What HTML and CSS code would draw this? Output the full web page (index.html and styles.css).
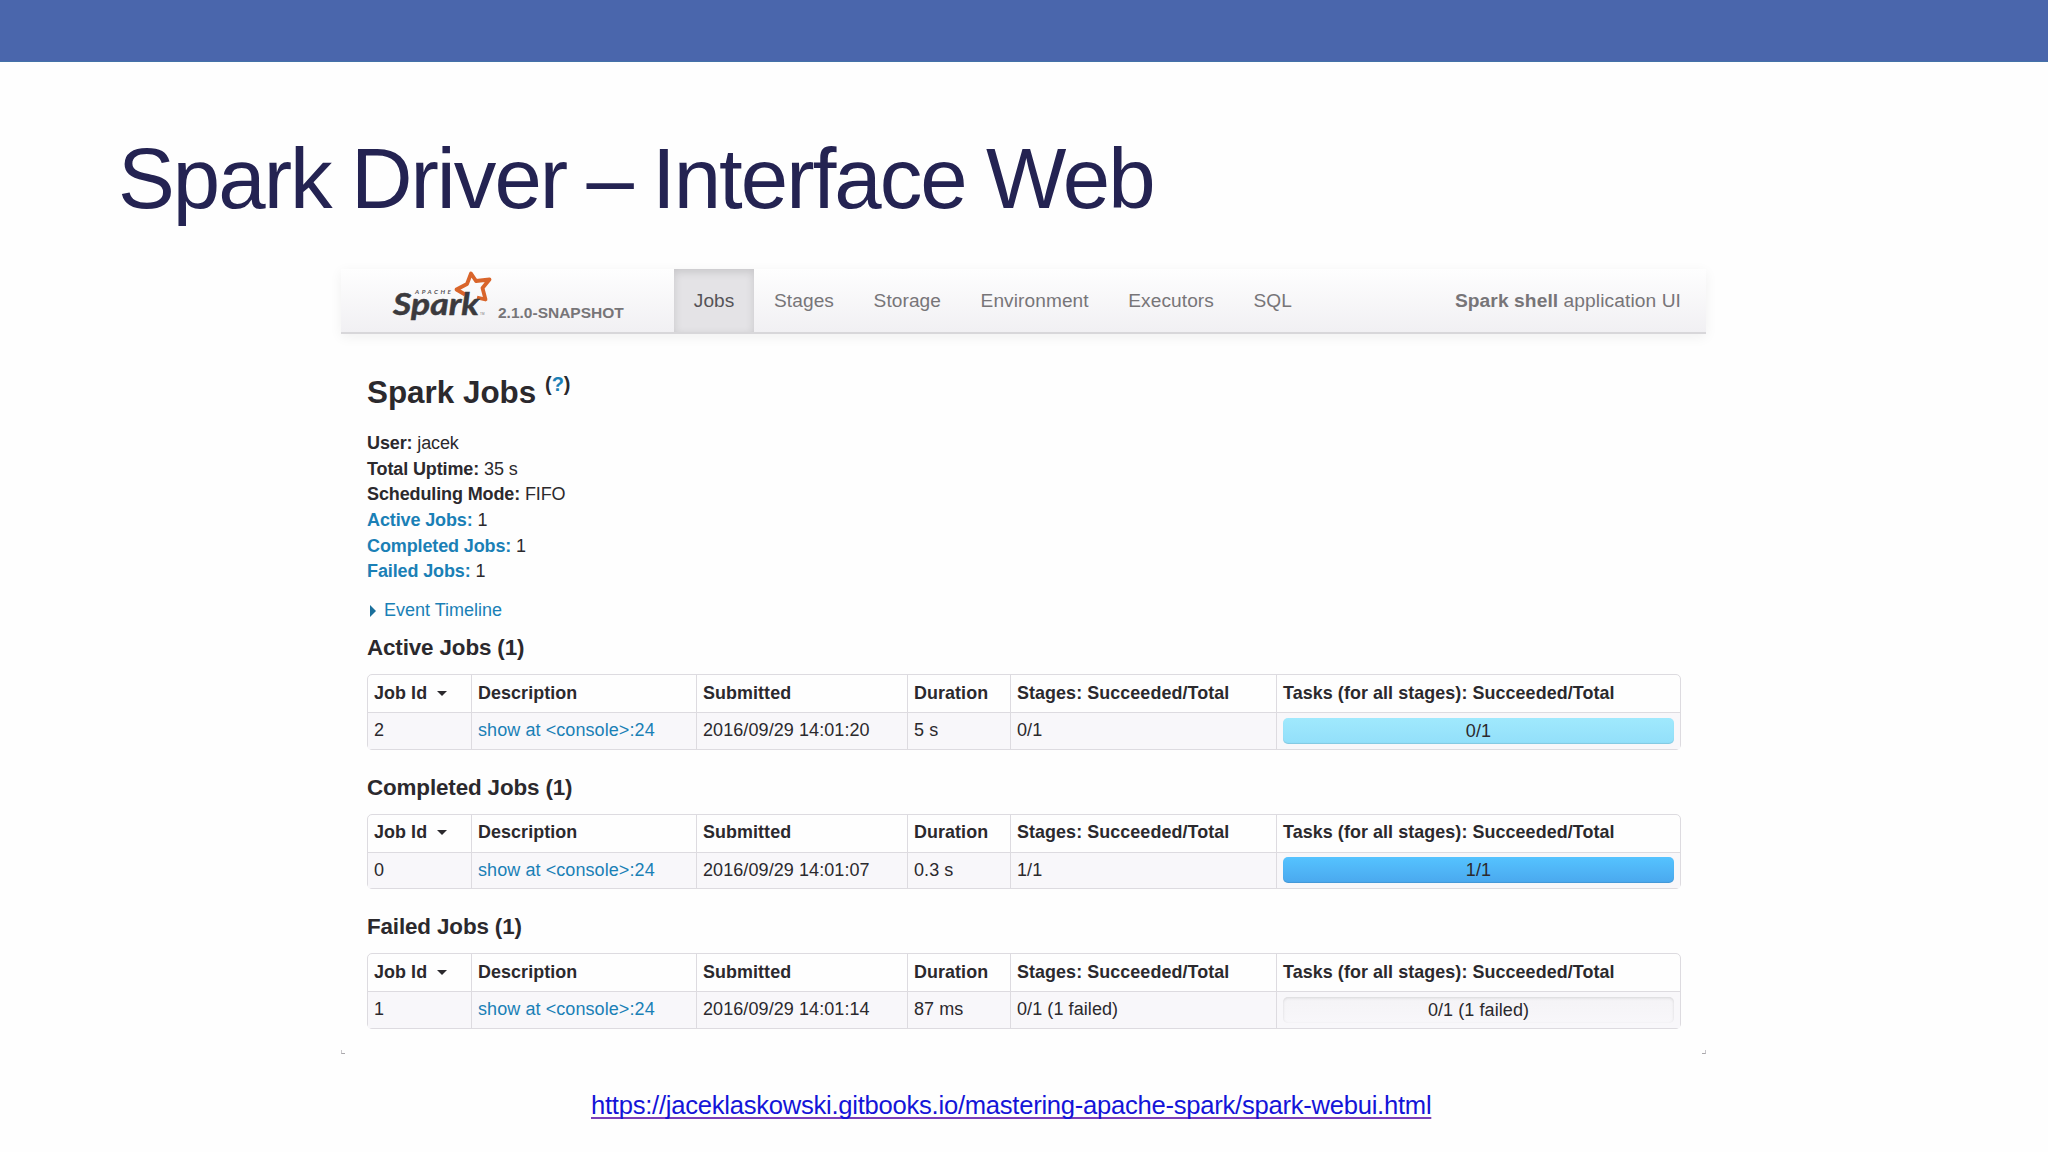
FILE: index.html
```html
<!DOCTYPE html>
<html lang="fr">
<head>
    <meta charset="UTF-8">
    <meta name="viewport" content="width=device-width, initial-scale=1.0">
    <title>Spark Driver – Interface Web</title>
    <link rel="stylesheet" href="styles.css">
</head>
<body>
    <div class="top-bar"></div>
    <h1 class="slide-title">Spark Driver – Interface Web</h1>

    <div class="spark-ui">
        <div class="navbar">
            <div class="brand">
                <svg class="logo" width="102" height="54" viewBox="0 0 102 54">
                    <path class="star" d="M72 25.500 L63.500 20.500 L74 15 L78 4.500 L83 12 L96.500 10.500 L89.500 19 L92.500 30.500 L84 28.500"/>
                    <text class="logo-apache" x="22" y="25" textLength="36">APACHE</text>
                    <text class="logo-spark" x="0" y="46" textLength="86" lengthAdjust="spacingAndGlyphs">Spark</text>
                    <text class="logo-tm" x="87" y="46">TM</text>
                </svg>
                <span class="version">2.1.0-SNAPSHOT</span>
            </div>
            <ul class="nav">
                <li class="active">Jobs</li>
                <li>Stages</li>
                <li>Storage</li>
                <li>Environment</li>
                <li>Executors</li>
                <li>SQL</li>
            </ul>
            <p class="app-name"><strong>Spark shell</strong> application UI</p>
        </div>

        <div class="content">
            <h3>Spark Jobs <sup>(<a>?</a>)</sup></h3>
            <ul class="summary">
                <li><strong>User:</strong> jacek</li>
                <li><strong>Total Uptime:</strong> 35 s</li>
                <li><strong>Scheduling Mode:</strong> FIFO</li>
                <li><a><strong>Active Jobs:</strong></a> 1</li>
                <li><a><strong>Completed Jobs:</strong></a> 1</li>
                <li><a><strong>Failed Jobs:</strong></a> 1</li>
            </ul>
            <div class="timeline"><span class="arrow-right"></span><a>Event Timeline</a></div>

            <h4>Active Jobs (1)</h4>
            <table>
                <colgroup><col class="c-id"><col class="c-desc"><col class="c-sub"><col class="c-dur"><col class="c-stages"><col></colgroup>
                <tr>
                    <th>Job Id <span class="caret"></span></th>
                    <th>Description</th>
                    <th>Submitted</th>
                    <th>Duration</th>
                    <th>Stages: Succeeded/Total</th>
                    <th>Tasks (for all stages): Succeeded/Total</th>
                </tr>
                <tr>
                    <td>2</td>
                    <td><a>show at &lt;console&gt;:24</a></td>
                    <td>2016/09/29 14:01:20</td>
                    <td>5 s</td>
                    <td>0/1</td>
                    <td><div class="progress running">0/1</div></td>
                </tr>
            </table>

            <h4>Completed Jobs (1)</h4>
            <table>
                <colgroup><col class="c-id"><col class="c-desc"><col class="c-sub"><col class="c-dur"><col class="c-stages"><col></colgroup>
                <tr>
                    <th>Job Id <span class="caret"></span></th>
                    <th>Description</th>
                    <th>Submitted</th>
                    <th>Duration</th>
                    <th>Stages: Succeeded/Total</th>
                    <th>Tasks (for all stages): Succeeded/Total</th>
                </tr>
                <tr>
                    <td>0</td>
                    <td><a>show at &lt;console&gt;:24</a></td>
                    <td>2016/09/29 14:01:07</td>
                    <td>0.3 s</td>
                    <td>1/1</td>
                    <td><div class="progress completed">1/1</div></td>
                </tr>
            </table>

            <h4>Failed Jobs (1)</h4>
            <table>
                <colgroup><col class="c-id"><col class="c-desc"><col class="c-sub"><col class="c-dur"><col class="c-stages"><col></colgroup>
                <tr>
                    <th>Job Id <span class="caret"></span></th>
                    <th>Description</th>
                    <th>Submitted</th>
                    <th>Duration</th>
                    <th>Stages: Succeeded/Total</th>
                    <th>Tasks (for all stages): Succeeded/Total</th>
                </tr>
                <tr>
                    <td>1</td>
                    <td><a>show at &lt;console&gt;:24</a></td>
                    <td>2016/09/29 14:01:14</td>
                    <td>87 ms</td>
                    <td>0/1 (1 failed)</td>
                    <td><div class="progress">0/1 (1 failed)</div></td>
                </tr>
            </table>
        </div>
        <div class="corners"><span></span><span></span></div>
    </div>

    <div class="source"><a>https://jaceklaskowski.gitbooks.io/mastering-apache-spark/spark-webui.html</a></div>
</body>
</html>
```
FILE: styles.css
```css
* {
    box-sizing: border-box;
    margin: 0;
    padding: 0;
}

body {
    width: 2048px;
    height: 1152px;
    overflow: hidden;
    background-color: #fefefe;
    font-family: "Liberation Sans", Arial, sans-serif;
}

.top-bar {
    height: 62px;
    background-color: #4a66ac;
    border-bottom: 1px solid #4472a8;
}

.slide-title {
    margin-top: 68px;
    padding-left: 118px;
    height: 97px;
    line-height: 97px;
    font-size: 85.2px;
    font-weight: 400;
    letter-spacing: -1.97px;
    word-spacing: -1.5px;
    color: #242352;
    white-space: nowrap;
}

/* Spark web UI */
.spark-ui {
    width: 1365px;
    height: 785px;
    margin: 42px 0 0 341px;
    font-size: 18px;
    line-height: 25.67px;
    letter-spacing: 0.08px;
    color: #2b292d;
}

.spark-ui a {
    color: #1a80b6;
}

ul {
    list-style: none;
}

.navbar {
    display: flex;
    height: 65px;
    padding-right: 25px;
    background: linear-gradient(#fefefe, #f1f0f3);
    border-bottom: 2px solid #d8d7da;
    box-shadow: 0 3px 12px rgba(0, 0, 0, 0.06);
    color: #777578;
}

.brand {
    display: flex;
    width: 333px;
    padding-left: 52px;
}

.logo {
    flex: none;
    overflow: visible;
}

.star {
    fill: none;
    stroke: #d9652b;
    stroke-width: 3.8;
    stroke-linejoin: round;
}

.logo-spark {
    font-family: Lato, sans-serif;
    font-size: 31px;
    font-weight: 700;
    font-style: italic;
    letter-spacing: 0;
    fill: #3b3a3d;
    stroke: #3b3a3d;
    stroke-width: 0.5;
}

.logo-apache {
    font-family: Lato, sans-serif;
    font-size: 6.4px;
    font-weight: 700;
    font-style: italic;
    fill: #555357;
}

.logo-tm {
    font-size: 3px;
    fill: #777578;
}

.version {
    padding-top: 31px;
    margin-left: 3px;
    font-size: 15.5px;
    font-weight: 700;
    letter-spacing: 0;
}

.nav {
    display: flex;
    font-size: 19.1px;
}

.nav li {
    padding: 19px 19.8px 0;
}

.nav .active {
    background-color: #e4e3e6;
    box-shadow: inset 0 3px 8px rgba(0, 0, 0, 0.13);
    color: #555357;
}

.app-name {
    margin-left: auto;
    padding-top: 19px;
    font-size: 19.2px;
}

.content {
    padding: 33px 26px 0;
}

h3 {
    height: 51px;
    line-height: 51px;
    font-size: 31.4px;
    letter-spacing: 0;
}

h3 sup {
    font-size: 20px;
    line-height: 0;
    vertical-align: 12px;
}

.summary {
    margin-top: 13px;
    letter-spacing: -0.12px;
}

.timeline {
    display: flex;
    align-items: center;
    margin-top: 13px;
    letter-spacing: 0;
}

.arrow-right {
    margin: 0 8px 0 3px;
    border: solid transparent;
    border-width: 6px 0 6px 6px;
    border-left-color: #1a6f9b;
}

h4 {
    height: 26px;
    margin: 11.5px 0 13px;
    line-height: 26px;
    font-size: 22.4px;
    letter-spacing: -0.13px;
}

table {
    width: 1314px;
    table-layout: fixed;
    border: 1px solid #dddbe0;
    border-spacing: 0;
    border-radius: 5px;
}

table + h4 {
    margin-top: 25px;
}

.c-id {
    width: 103px;
}

.c-desc {
    width: 225px;
}

.c-sub {
    width: 211px;
}

.c-dur {
    width: 103px;
}

.c-stages {
    width: 266px;
}

th, td {
    height: 36.8px;
    padding: 0 6px;
    border-left: 1px solid #dddbe0;
    text-align: left;
    white-space: nowrap;
}

th {
    font-size: 17.9px;
}

th:first-child, td:first-child {
    border-left: none;
}

td {
    border-top: 1px solid #dddbe0;
    background-color: #f8f7fa;
}

.caret {
    display: inline-block;
    margin-left: 5px;
    vertical-align: 3px;
    border: solid transparent;
    border-width: 5px 5px 0;
    border-top-color: #2b292d;
}

.progress {
    height: 26px;
    line-height: 26px;
    border-radius: 5px;
    background: linear-gradient(#f4f3f6, #f8f7fa);
    box-shadow: inset 0 1px 3px rgba(0, 0, 0, 0.12);
    text-align: center;
}

.running {
    background: linear-gradient(#a0e9fd, #92dffa);
    box-shadow: inset 0 -1px 1px rgba(0, 0, 0, 0.1);
}

.completed {
    background: linear-gradient(#55c3ff, #4aa8ee);
    box-shadow: inset 0 -1px 1px rgba(0, 0, 0, 0.1);
}

/* small marks at the bottom of the window */
.corners {
    display: flex;
    justify-content: space-between;
    margin-top: 21px;
}

.corners span {
    width: 4px;
    height: 4px;
    border-bottom: 1px solid #aaa8ac;
    border-left: 1px solid #c8c6ca;
}

.corners span:last-child {
    border-left: none;
    border-right: 1px solid #c8c6ca;
}

.source {
    margin: 36px 0 0 591px;
    line-height: 30px;
    font-size: 25.6px;
    letter-spacing: -0.255px;
    white-space: nowrap;
}

.source a {
    color: #1414d8;
    text-decoration: underline #7a3fb8 2px;
    text-underline-offset: 3px;
    text-decoration-skip-ink: none;
}
```
